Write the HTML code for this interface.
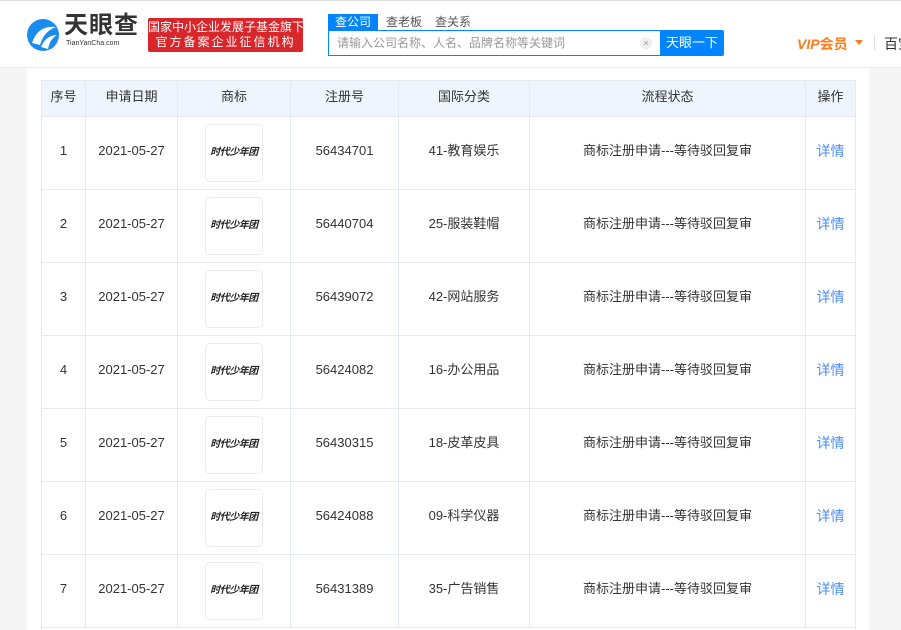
<!DOCTYPE html>
<html><head><meta charset="utf-8"><style>
*{margin:0;padding:0;box-sizing:border-box}
html,body{width:901px;height:630px;overflow:hidden}
body{background:#f5f5f5;font-family:"Liberation Sans","Noto Sans CJK SC",sans-serif;position:relative}
.hdr{position:absolute;left:0;top:0;width:901px;height:68px;background:#fff;border-top:1px solid #ddd;border-bottom:1px solid #eee}
.abs{position:absolute;white-space:nowrap}
.panel{position:absolute;left:27px;top:68px;width:842px;height:562px;background:#fff}
table{position:absolute;left:41px;top:80px;border-collapse:collapse;table-layout:fixed;font-size:13px;color:#333}
td,th{border:1px solid #e3eaf4;text-align:center;font-weight:normal;padding-bottom:4px;line-height:16px}
th{height:36px;background:#eef5fd;font-size:13px}
td{height:73px}
td:nth-child(3){padding-bottom:0}
.lg{width:58px;height:58px;margin:0 auto;border:1px solid #ececec;border-radius:5px;display:flex;align-items:center;justify-content:center;font-size:10px;font-weight:bold;font-style:italic;color:#222;letter-spacing:-0.5px;white-space:nowrap}
a{color:#4a8cff;text-decoration:none;font-size:14px}
</style></head><body>
<div class="hdr">
<svg class="abs" style="left:26px;top:16px" width="34" height="36" viewBox="0 0 34 36"><circle cx="17" cy="18" r="16" fill="#1a8cf0"/><path d="M6 26 Q12 8 30 10 Q18 14 14 28Z" fill="#fff"/><path d="M15 30 Q20 18 31 18 Q24 22 22 32Z" fill="#fff"/></svg>
<div class="abs" style="left:64px;top:12px;font-size:24px;line-height:26px;font-weight:bold;color:#333;letter-spacing:1px">天眼查</div>
<div class="abs" style="left:66px;top:39px;font-size:7px;line-height:8px;color:#333">TianYanCha.com</div>
<div class="abs" style="left:148px;top:17px;width:155px;height:34px;background:#d8262b;border-radius:2px;color:#fff;font-size:12px;line-height:15px;text-align:center;padding-top:2px">国家中小企业发展子基金旗下<br><span style="letter-spacing:2px">官方备案企业征信机构</span></div>
<div class="abs" style="left:328px;top:13px;width:50px;height:17px;background:#0084ff;color:#fff;font-size:12px;text-align:center;line-height:17px">查公司</div>
<div class="abs" style="left:386px;top:13px;font-size:12px;color:#555;line-height:17px">查老板</div>
<div class="abs" style="left:435px;top:13px;font-size:12px;color:#555;line-height:17px">查关系</div>
<div class="abs" style="left:328px;top:29px;width:334px;height:26px;border:1px solid #0084ff;font-size:12px;color:#999;line-height:24px;padding-left:8px">请输入公司名称、人名、品牌名称等关键词</div>
<div class="abs" style="left:640px;top:36px;width:12px;height:12px;border-radius:6px;background:#eee;color:#999;font-size:9px;text-align:center;line-height:12px">×</div>
<div class="abs" style="left:660px;top:29px;width:64px;height:26px;background:#0084ff;color:#fff;font-size:13px;text-align:center;line-height:26px;border-radius:0 2px 2px 0">天眼一下</div>
<div class="abs" style="left:797px;top:33px;font-size:14px;font-weight:bold;color:#ff7a1a"><i>VIP</i>会员</div>
<div class="abs" style="left:855px;top:39px;border-left:4px solid transparent;border-right:4px solid transparent;border-top:5px solid #ff7a1a"></div>
<div class="abs" style="left:874px;top:34px;width:1px;height:15px;background:#ddd"></div>
<div class="abs" style="left:884px;top:33px;font-size:14px;color:#333">百宝</div>
</div>
<div class="panel"></div>
<table>
<colgroup><col style="width:44px"><col style="width:92px"><col style="width:113px"><col style="width:108px"><col style="width:131px"><col style="width:276px"><col style="width:50px"></colgroup>
<tr><th>序号</th><th>申请日期</th><th style="padding-bottom:4px">商标</th><th>注册号</th><th>国际分类</th><th>流程状态</th><th>操作</th></tr>
<tr><td>1</td><td>2021-05-27</td><td><div class="lg">时代少年团</div></td><td>56434701</td><td>41-教育娱乐</td><td>商标注册申请---等待驳回复审</td><td><a>详情</a></td></tr>
<tr><td>2</td><td>2021-05-27</td><td><div class="lg">时代少年团</div></td><td>56440704</td><td>25-服装鞋帽</td><td>商标注册申请---等待驳回复审</td><td><a>详情</a></td></tr>
<tr><td>3</td><td>2021-05-27</td><td><div class="lg">时代少年团</div></td><td>56439072</td><td>42-网站服务</td><td>商标注册申请---等待驳回复审</td><td><a>详情</a></td></tr>
<tr><td>4</td><td>2021-05-27</td><td><div class="lg">时代少年团</div></td><td>56424082</td><td>16-办公用品</td><td>商标注册申请---等待驳回复审</td><td><a>详情</a></td></tr>
<tr><td>5</td><td>2021-05-27</td><td><div class="lg">时代少年团</div></td><td>56430315</td><td>18-皮革皮具</td><td>商标注册申请---等待驳回复审</td><td><a>详情</a></td></tr>
<tr><td>6</td><td>2021-05-27</td><td><div class="lg">时代少年团</div></td><td>56424088</td><td>09-科学仪器</td><td>商标注册申请---等待驳回复审</td><td><a>详情</a></td></tr>
<tr><td>7</td><td>2021-05-27</td><td><div class="lg">时代少年团</div></td><td>56431389</td><td>35-广告销售</td><td>商标注册申请---等待驳回复审</td><td><a>详情</a></td></tr>
</table>
<div class="abs" style="left:41px;top:627px;width:815px;height:3px;border-left:1px solid #e3eaf4;border-right:1px solid #e3eaf4"></div>
</body></html>
